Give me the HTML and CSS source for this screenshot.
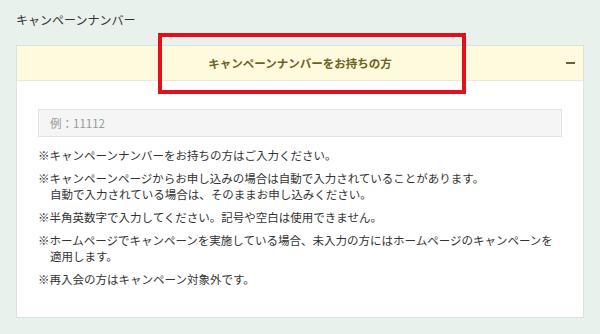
FILE: index.html
```html
<!DOCTYPE html>
<html lang="ja">
<head>
    <meta charset="UTF-8">
    <title>キャンペーンナンバー</title>
    <link rel="stylesheet" href="styles.css">
</head>
<body>
<div class="page">
    <h2 class="title">キャンペーンナンバー</h2>

    <div class="panel">
        <div class="panel-head">
            <span class="head-text">キャンペーンナンバーをお持ちの方</span>
            <span class="toggle"></span>
        </div>
        <div class="panel-body">
            <input type="text" class="code-input" placeholder="例：11112">
            <ul class="notes">
                <li>※キャンペーンナンバーをお持ちの方はご入力ください。</li>
                <li>※キャンペーンページからお申し込みの場合は自動で入力されていることがあります。<br>自動で入力されている場合は、そのままお申し込みください。</li>
                <li>※半角英数字で入力してください。記号や空白は使用できません。</li>
                <li>※ホームページでキャンペーンを実施している場合、未入力の方にはホームページのキャンペーンを<br>適用します。</li>
                <li>※再入会の方はキャンペーン対象外です。</li>
            </ul>
        </div>
    </div>

    <!-- 赤枠 -->
    <div class="mark"></div>
</div>
</body>
</html>
```

FILE: styles.css
```css
body {
    margin: 0;
    background: #e8f1eb;
    font-family: "Noto Sans CJK JP", "Liberation Sans", sans-serif;
    color: #333;
}

.page {
    position: relative;
    padding: 12px 16px 0;
}

.title {
    margin: 0;
    font-size: 12px;
    line-height: 16px;
    font-weight: normal;
    color: #333;
}

.panel {
    margin-top: 17px;
    background: #fff;
    border: 1px solid #d9e4dc;
}

.panel-head {
    position: relative;
    height: 34px;
    display: flex;
    align-items: center;
    justify-content: center;
    background: #fdfadd;
    border-bottom: 1px solid #ebe9d6;
}

.head-text {
    font-size: 11.5px;
    font-weight: bold;
    color: #6e6220;
}

.toggle {
    position: absolute;
    right: 8px;
    top: 16px;
    width: 9px;
    height: 2px;
    background: #6b6030;
}

.panel-body {
    padding: 28px 21px 30px;
}

.code-input {
    display: block;
    box-sizing: border-box;
    width: 100%;
    height: 28px;
    margin: 0;
    padding: 0 11px;
    background: #f5f5f5;
    border: 1px solid #e2e2e2;
    font-family: inherit;
    font-size: 11.5px;
    outline: none;
}

.code-input::placeholder {
    color: #999;
}

.notes {
    list-style: none;
    margin: 10px 0 0;
    padding: 0;
    font-size: 11.5px;
    line-height: 16px;
    color: #333;
}

.notes li {
    padding-left: 12px;
    text-indent: -12px;
    margin-bottom: 7px;
}

.notes li:last-child {
    margin-bottom: 0;
}

.mark {
    position: absolute;
    left: 158px;
    top: 33px;
    width: 300px;
    height: 53px;
    border: 4px solid #e3101b;
}
```
